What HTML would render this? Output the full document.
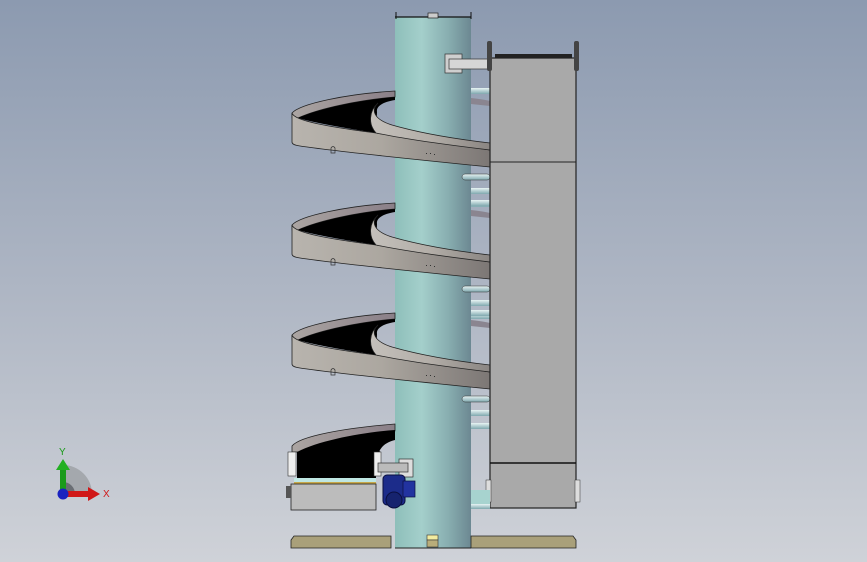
<!DOCTYPE html>
<html><head><style>
html,body{margin:0;padding:0;width:867px;height:562px;overflow:hidden}
svg{display:block}
text{font-family:"Liberation Sans",sans-serif}
</style></head><body>
<svg width="867" height="562" viewBox="0 0 867 562">
<defs>
<linearGradient id="bg" x1="0" y1="0" x2="0" y2="1">
<stop offset="0" stop-color="#8c9ab0"/><stop offset="0.5" stop-color="#adb5c3"/><stop offset="1" stop-color="#cfd2d8"/>
</linearGradient>
<linearGradient id="col" x1="0" y1="0" x2="1" y2="0">
<stop offset="0" stop-color="#8ebfba"/><stop offset="0.35" stop-color="#a4cfcb"/><stop offset="0.7" stop-color="#88aeb0"/><stop offset="1" stop-color="#6c8892"/>
</linearGradient>
<linearGradient id="band" x1="0" y1="0" x2="1" y2="0">
<stop offset="0" stop-color="#b8b4ae"/><stop offset="0.45" stop-color="#aca7a0"/><stop offset="1" stop-color="#7c7775"/>
</linearGradient>
<linearGradient id="back" x1="0" y1="0" x2="1" y2="0">
<stop offset="0" stop-color="#aba5a2"/><stop offset="1" stop-color="#8a7f88"/>
</linearGradient>
<linearGradient id="inner" x1="0" y1="0" x2="1" y2="0">
<stop offset="0" stop-color="#c4c0bb"/><stop offset="0.5" stop-color="#b3aea8"/><stop offset="1" stop-color="#8a8582"/>
</linearGradient>
<linearGradient id="roll" x1="0" y1="0" x2="0" y2="1">
<stop offset="0" stop-color="#e8f4f4"/><stop offset="1" stop-color="#7fa8ae"/>
</linearGradient>
<g id="turn">
<rect x="471" y="88" width="19" height="6" fill="url(#roll)"/>
<path d="M471,98 C480,99 486,100 490,101 L490,106 L471,104 Z" fill="#8a8590"/>
<path d="M395,91 C345,94 300,104 292,113 L292,118 L298,118 C320,108 360,100 395,97 Z" fill="url(#back)" stroke="#222" stroke-width="0.8"/>
<path d="M298,118 C320,108 360,100 395,97 L395,100 C383,102 376,106 377,112 L376,133 C345,128 315,123 298,118 Z" fill="#000"/>
<path d="M292,113 C294,121 330,127 376,133 C410,138 450,144 490,150 L490,167 C420,160 340,152 300,146 C294,145 292,144 292,142 Z" fill="url(#band)" stroke="#222" stroke-width="0.8"/>
<path d="M378,103 C371,110 373,119 392,125 C420,133 455,139 490,143 L490,150 C440,144 400,138 376,133 C368,124 369,111 378,103 Z" fill="url(#inner)" stroke="#222" stroke-width="0.8"/>
<rect x="462" y="174" width="28" height="6" rx="3" fill="url(#roll)" stroke="#333" stroke-width="0.5"/>
<rect x="471" y="188" width="19" height="6" fill="url(#roll)"/>
<rect x="471" y="201" width="19" height="6" fill="url(#roll)"/>
<path d="M331,153 L331,148 Q333,145 335,148 L335,153 Z" fill="none" stroke="#333" stroke-width="0.7"/>
<g fill="#333"><rect x="426" y="153" width="1" height="1"/><rect x="430" y="153" width="1" height="1"/><rect x="434" y="154" width="1" height="1"/></g>
</g>
</defs>
<rect width="867" height="562" fill="url(#bg)"/>
<!-- column -->
<rect x="395" y="17" width="76" height="531" fill="url(#col)"/>
<line x1="395" y1="17" x2="471" y2="17" stroke="#111" stroke-width="1.2"/>
<line x1="396" y1="12" x2="396" y2="19" stroke="#111"/><line x1="471" y1="12" x2="471" y2="19" stroke="#111"/>
<rect x="428" y="13" width="10" height="5" fill="#ccc" stroke="#222" stroke-width="0.7"/>
<!-- top bracket -->
<rect x="445" y="54" width="17" height="19" fill="#cfcfcf" stroke="#333" stroke-width="0.7"/>
<rect x="449" y="59" width="40" height="10" fill="#d6d6d6" stroke="#333" stroke-width="0.7"/>
<!-- turns -->
<use href="#turn"/>
<use href="#turn" transform="translate(0,112)"/>
<use href="#turn" transform="translate(0,222)"/>
<!-- bottom partial turn -->
<path d="M395,424 C345,428 300,436 292,446 L292,452 L380,452 C372,446 380,435 395,431 Z" fill="url(#back)" stroke="#222" stroke-width="0.8"/>
<path d="M297,452 C320,440 365,432 395,430 L395,440 C380,444 375,452 376,478 L297,478 Z" fill="#000"/>
<rect x="288" y="452" width="8" height="24" fill="#eee" stroke="#333" stroke-width="0.6"/>
<rect x="374" y="452" width="7" height="24" fill="#eee" stroke="#333" stroke-width="0.6"/>
<rect x="294" y="478" width="82" height="4" fill="#bfe7e3"/>
<rect x="294" y="482" width="82" height="2" fill="#c8a84a"/>
<rect x="291" y="484" width="85" height="26" fill="#bcbcbc" stroke="#222" stroke-width="0.8"/>
<rect x="286" y="486" width="5" height="12" fill="#555"/>
<!-- motor bracket -->
<rect x="399" y="459" width="14" height="18" fill="#ddd" stroke="#333" stroke-width="0.7"/>
<rect x="378" y="463" width="30" height="9" fill="#bbb" stroke="#333" stroke-width="0.7"/>
<rect x="383" y="475" width="22" height="30" rx="4" fill="#1c2c8a" stroke="#0a0f40"/>
<circle cx="394" cy="500" r="8" fill="#16236e" stroke="#0a0f40"/>
<rect x="403" y="481" width="12" height="16" fill="#2233a0" stroke="#0a0f40" stroke-width="0.7"/>
<!-- right box -->
<rect x="490" y="58" width="86" height="450" fill="#a9a9a9" stroke="#222" stroke-width="1.2"/>
<line x1="490" y1="162" x2="576" y2="162" stroke="#222" stroke-width="1"/>
<line x1="490" y1="463" x2="576" y2="463" stroke="#111" stroke-width="1.5"/>
<rect x="495" y="54" width="77" height="4" fill="#222"/>
<rect x="487" y="41" width="5" height="30" rx="2" fill="#444"/>
<rect x="574" y="41" width="5" height="30" rx="2" fill="#444"/>
<rect x="486" y="480" width="5" height="22" fill="#ddd" stroke="#333" stroke-width="0.5"/>
<rect x="575" y="480" width="5" height="22" fill="#ddd" stroke="#333" stroke-width="0.5"/>
<rect x="471" y="490" width="19" height="14" fill="#a7d3cf"/>
<rect x="471" y="504" width="19" height="5" fill="url(#roll)"/>
<!-- base -->
<path d="M294,536 L391,536 L391,548 L291,548 L291,540 Z" fill="#a9a07a" stroke="#222" stroke-width="0.8"/>
<path d="M471,536 L573,536 L576,540 L576,548 L471,548 Z" fill="#a9a07a" stroke="#222" stroke-width="0.8"/>
<line x1="395" y1="548" x2="471" y2="548" stroke="#222"/>
<rect x="427" y="535" width="11" height="5" fill="#f3eca0" stroke="#333" stroke-width="0.6"/>
<rect x="427" y="540" width="11" height="7" fill="#b9ad7a" stroke="#333" stroke-width="0.6"/>
<!-- triad -->
<path d="M63,494 L63,465 A29,29 0 0 1 92,494 Z" fill="#a4a8ad"/>
<path d="M63,494 L63,482 A12,12 0 0 1 75,494 Z" fill="#6a6e74"/>
<rect x="60" y="468" width="6" height="26" fill="#1a9a1a"/>
<path d="M56,470 L63,459 L70,470 Z" fill="#22b022"/>
<rect x="63" y="491" width="27" height="6" fill="#d01818"/>
<path d="M88,487 L100,494 L88,501 Z" fill="#d01818"/>
<circle cx="63" cy="494" r="5.5" fill="#1a22c0"/>
<text x="59" y="455" font-size="10" fill="#1a9a1a">Y</text>
<text x="103" y="497" font-size="10" fill="#d01818">X</text>
</svg>
</body></html>
